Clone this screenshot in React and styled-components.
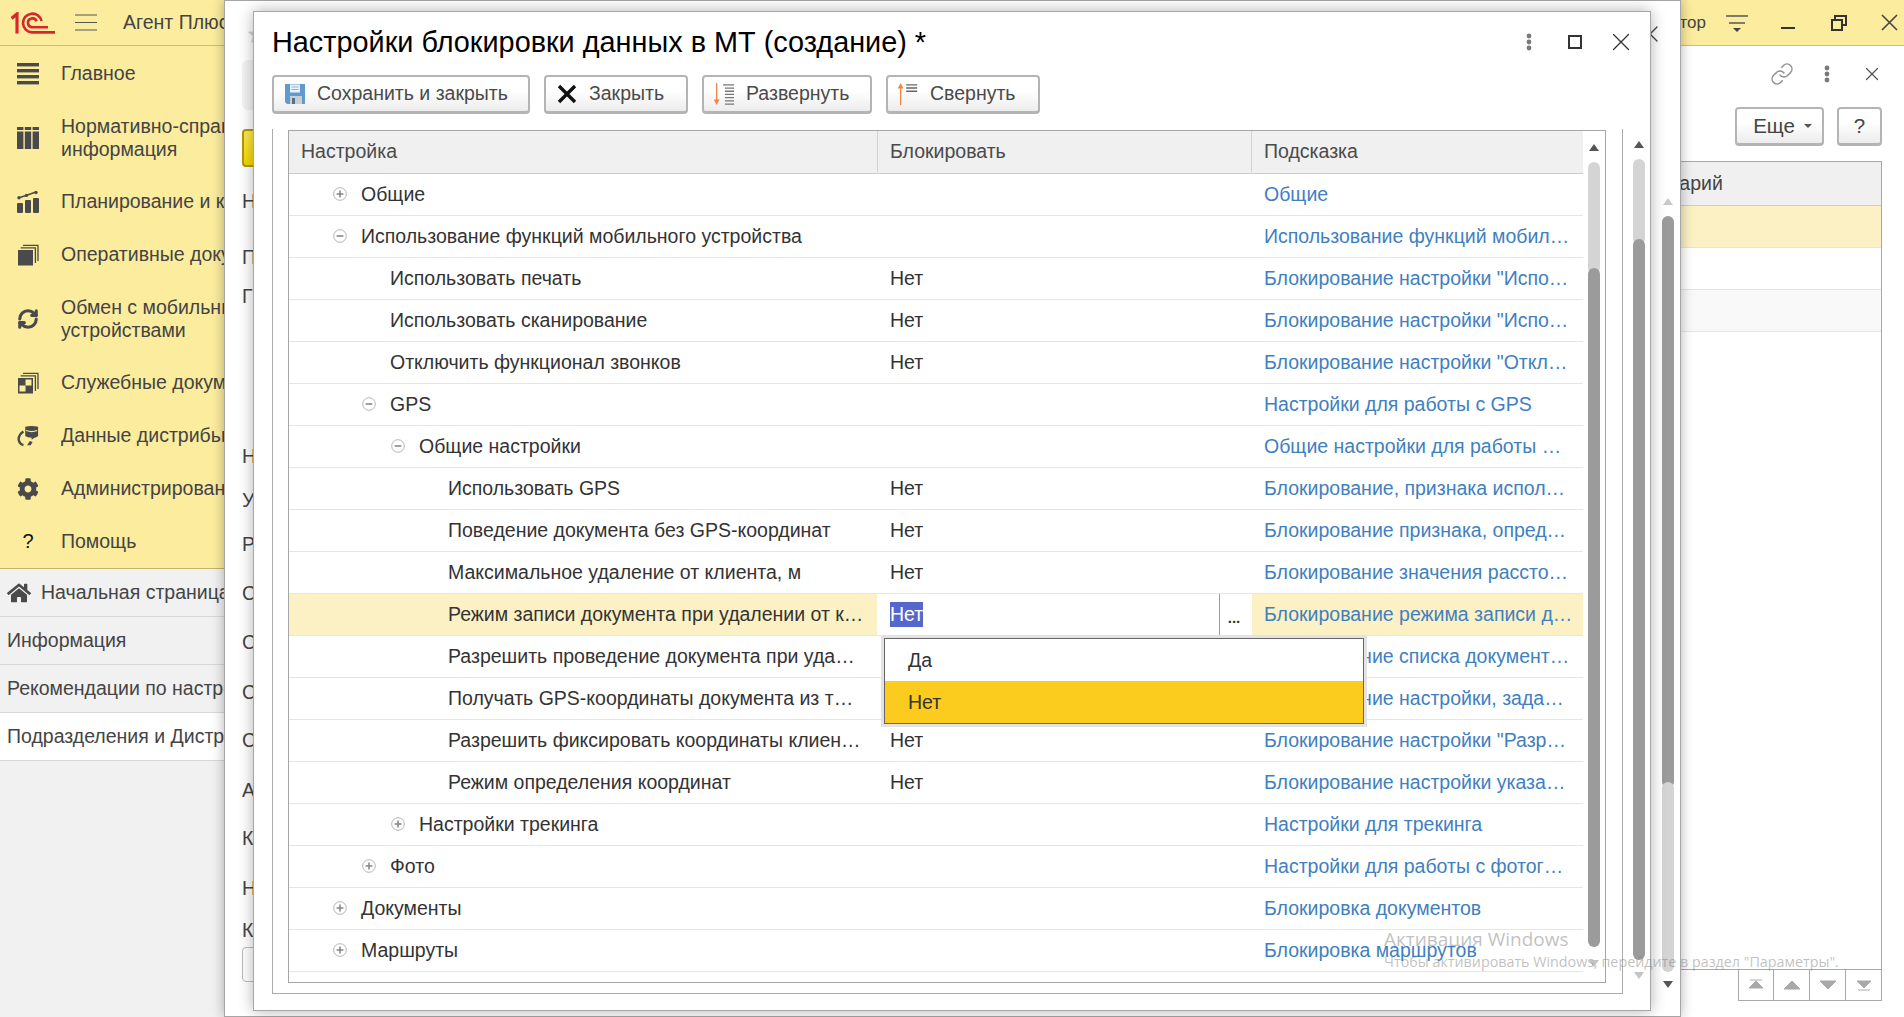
import React from 'react';
import styled, { createGlobalStyle } from 'styled-components';
import { Link as LinkIcon, RefreshCw, X } from 'lucide-react';
import { FaCog, FaHome } from 'react-icons/fa';

const FONT = '"Liberation Sans", Arial, sans-serif';

const GlobalStyle = createGlobalStyle`
  html, body { margin: 0; padding: 0; background: #fff; }
  body { font-family: ${FONT}; font-size: 19.5px; color: #333; }
  * { box-sizing: border-box; }
`;

const Screen = styled.div`
  position: relative;
  width: 1904px;
  height: 1017px;
  overflow: hidden;
  display: flex;
  flex-direction: column;
`;

const TopBar = styled.header`
  height: 46px;
  flex: none;
  display: flex;
  align-items: center;
  padding-right: 3px;
  background: #fbec9e;
  border-bottom: 1px solid #cdbd7c;
  white-space: nowrap;
`;
const Logo = styled.svg`
  width: 44px;
  height: 22px;
  margin-left: 11px;
  flex: none;
`;
const Burger = styled.svg`
  width: 22px;
  height: 17px;
  margin-left: 20px;
  flex: none;
`;
const AppName = styled.span`
  margin-left: 26px;
  color: #444;
`;
const UserName = styled.span`
  margin-left: auto;
  color: #444;
  font-size: 17px;
`;
const BarIcon = styled.svg`
  width: ${p => p.$w || 24}px;
  height: 24px;
  flex: none;
  margin-left: ${p => p.$left || 0}px;
`;

const Body = styled.div`
  flex: 1;
  display: flex;
  min-height: 0;
`;

const Sidebar = styled.aside`
  width: 224px;
  flex: none;
  display: flex;
  flex-direction: column;
  overflow: hidden;
  background: #f1f1f1;
`;
const Nav = styled.nav`
  height: 523px;
  flex: none;
  padding-top: 1px;
  background: #fbec9e;
  border-bottom: 1px solid #c4b26a;
`;
const NavItem = styled.div`
  height: ${p => (p.$double ? 75 : 53)}px;
  display: flex;
  align-items: center;
  gap: 22px;
  padding-left: 17px;
  line-height: 23px;
  color: #444;
  white-space: nowrap;
`;
const NavGlyph = styled.span`
  width: 22px;
  height: 22px;
  flex: none;
  display: flex;
  align-items: center;
  justify-content: center;
  color: #4a4a4a;
`;
const NavText = styled.div`
  min-width: 0;
  overflow: hidden;
`;
const HelpMark = styled.span`
  color: #111;
  font-size: 20px;
`;
const TabItem = styled.div`
  height: 48px;
  display: flex;
  align-items: center;
  gap: 10px;
  padding-left: 7px;
  background: ${p => (p.$active ? '#fff' : '#f1f1f1')};
  border-bottom: 1px solid #d8d8d8;
  color: #444;
  white-space: nowrap;
`;
const HomeIcon = styled(FaHome)`
  flex: none;
  color: #4a4a4a;
`;

const Page = styled.main`
  flex: 1;
  min-width: 0;
  display: flex;
  flex-direction: column;
  padding: 0 10px 16px 0;
  background: #fff;
`;
const PageIcons = styled.div`
  height: 61px;
  flex: none;
  display: flex;
  justify-content: flex-end;
  align-items: center;
  padding-bottom: 5px;
`;
const IconSlot = styled.span`
  width: 45px;
  display: flex;
  justify-content: center;
  color: #8f8f8f;
`;
const PageButtons = styled.div`
  flex: none;
  display: flex;
  justify-content: flex-end;
  gap: 13px;
  padding-right: 12px;
  margin-bottom: 15px;
`;
const FlatButton = styled.div`
  width: ${p => p.$w}px;
  height: 39px;
  display: flex;
  align-items: center;
  justify-content: center;
  gap: 9px;
  padding-left: ${p => p.$pad || 0}px;
  border: 2px solid #b4b4b4;
  border-bottom-width: 3px;
  border-radius: 4px;
  background: linear-gradient(#fff 40%, #ececec);
  color: #444;
  font-size: 20.5px;
`;
const Caret = styled.i`
  width: 0;
  height: 0;
  border-left: 4px solid transparent;
  border-right: 4px solid transparent;
  border-top: 4px solid #555;
`;
const PageTable = styled.div`
  flex: 1;
  margin-right: 12px;
  border: 1px solid #a8a8a8;
  border-left: 0;
`;
const PageHead = styled.div`
  height: 44px;
  display: grid;
  grid-template-columns: 1fr 281px;
  align-items: center;
  background: #f0f0f0;
  border-bottom: 1px solid #ccc;
  color: #444;
`;
const PageRow = styled.div`
  height: 42px;
  background: ${p => p.$bg || '#fff'};
  border-bottom: 1px solid #e4e4e4;
`;
const Pager = styled.div`
  flex: none;
  display: flex;
  justify-content: flex-end;
  margin-right: 12px;
`;
const PagerButton = styled.div`
  width: 36px;
  height: 31px;
  display: flex;
  align-items: center;
  justify-content: center;
  border: 1px solid #a8a8a8;
  border-top: 0;
  border-left-width: ${p => (p.$first ? 1 : 0)}px;
`;

/* windows on top of the page */
const OuterWindow = styled.section`
  position: absolute;
  left: 224px;
  top: 0;
  width: 1457px;
  height: 1017px;
  display: flex;
  background: #fff;
  border: 1px solid #a6a6a6;
  box-shadow: 0 0 12px rgba(0, 0, 0, 0.3);
`;
const FormColumn = styled.div`
  flex: 1;
  min-width: 0;
  padding-left: 17px;
  color: #444;
  overflow: hidden;
`;
const FormHead = styled.div`
  height: 59px;
  display: flex;
  align-items: center;
  justify-content: space-between;
  padding: 6px 0 0 5px;
  margin-right: -2px;
`;
const GreyBlock = styled.div`
  width: 60px;
  height: 50px;
  border-radius: 6px;
  background: #f3f3f3;
  margin-bottom: 19px;
`;
const YellowButton = styled.div`
  width: 60px;
  height: 38px;
  border: 2px solid #b09a08;
  border-radius: 4px;
  background: linear-gradient(#ffe94f, #f6d800);
`;
const FormLabel = styled.div`
  height: 22px;
  line-height: 22px;
  margin-top: ${p => p.$gap}px;
  white-space: nowrap;
`;
const FormInput = styled.div`
  width: 60px;
  height: 35px;
  margin-top: 6px;
  border: 1px solid #bbb;
  border-radius: 4px;
`;

const InnerWindow = styled.section`
  position: absolute;
  left: 28px;
  top: 10px;
  width: 1398px;
  height: 1000px;
  display: flex;
  flex-direction: column;
  padding-left: 18px;
  background: #fff;
  border: 1px solid #a6a6a6;
  box-shadow: 0 0 14px rgba(0, 0, 0, 0.3);
`;
const TitleRow = styled.div`
  height: 63px;
  flex: none;
  display: flex;
  align-items: center;
  padding-bottom: 3px;
`;
const Title = styled.h1`
  margin: 0;
  flex: 1;
  font-size: 28.85px;
  font-weight: 400;
  color: #000;
  white-space: nowrap;
`;
const WindowIcons = styled.div`
  display: flex;
  align-items: center;
  margin-right: 6px;
  color: #333;
`;
const WindowSlot = styled.span`
  width: 46px;
  display: flex;
  justify-content: center;
`;
const Toolbar = styled.div`
  height: 54px;
  flex: none;
  display: flex;
  gap: 14px;
`;
const ToolButton = styled.div`
  width: ${p => p.$w}px;
  height: 39px;
  display: flex;
  align-items: center;
  gap: ${p => p.$gap || 11}px;
  padding-left: ${p => p.$pad || 11}px;
  padding-bottom: 1px;
  border: 2px solid #b4b4b4;
  border-bottom-width: 3px;
  border-radius: 4px;
  background: linear-gradient(#fff 40%, #ececec);
  color: #4a4a4a;
  white-space: nowrap;
`;
const Content = styled.div`
  flex: 1;
  min-height: 0;
  display: flex;
  gap: 10px;
`;
const Frame = styled.div`
  width: 1351px;
  height: 865px;
  padding: 1px 0 0 15px;
  border: 1px solid #ababab;
  border-top: 0;
`;
const Table = styled.div`
  width: 1318px;
  height: 853px;
  display: flex;
  background: #fff;
  border: 1px solid #a6a6a6;
`;
const Rows = styled.div`
  width: 1294px;
  flex: none;
`;
const Row = styled.div`
  display: grid;
  grid-template-columns: 588px 375px 331px;
  height: 42px;
  align-items: stretch;
  border-bottom: 1px solid #e6e6e6;
`;
const HeadRow = styled(Row)`
  grid-template-columns: 589px 374px 331px;
  height: 43px;
  padding-bottom: 1px;
  background: #f0f0f0;
  border-bottom: 1px solid #ccc;
  color: #4a4a4a;
`;
const HeadCell = styled.div`
  display: flex;
  align-items: center;
  padding-left: 12px;
  border-right: ${p => (p.$last ? 0 : '1px solid #d2d2d2')};
`;
const NameCell = styled.div`
  display: flex;
  align-items: center;
  padding-left: ${p => 72 + p.$level * 29 - (p.$tree ? 28 : 0)}px;
  background: ${p => (p.$current ? '#fcf1c4' : 'transparent')};
  white-space: nowrap;
  color: #333;
`;
const Expander = styled.svg`
  width: 14px;
  height: 14px;
  flex: none;
  margin-right: 14px;
  margin-top: -2px;
`;
const ValueCell = styled.div`
  position: relative;
  display: flex;
  align-items: center;
  padding-left: 13px;
  color: #333;
`;
const SelectedText = styled.span`
  background: #5566cc;
  color: #fff;
  line-height: 25px;
`;
const PickButton = styled.span`
  position: absolute;
  right: 0;
  top: 0;
  bottom: 0;
  width: 33px;
  display: flex;
  align-items: center;
  justify-content: center;
  border-left: 1px solid #9a9a9a;
  color: #333;
  font-weight: 700;
  font-size: 15px;
  padding: 5px 4px 0 0;
`;
const Popup = styled.div`
  position: absolute;
  z-index: 5;
  left: 7px;
  top: 44px;
  width: 480px;
  height: 86px;
  background: #fff;
  border: 1px solid #666;
  box-shadow: 0 0 0 3px #e3e3e3;
`;
const PopupItem = styled.div`
  height: 42px;
  display: flex;
  align-items: center;
  padding-left: 23px;
  background: ${p => (p.$active ? '#fbcc1e' : '#fff')};
  color: #333;
`;
const HintCell = styled.div`
  display: flex;
  align-items: center;
  padding-left: 12px;
  background: ${p => (p.$current ? '#fcf1c4' : 'transparent')};
  color: #3f80c0;
  white-space: nowrap;
`;

const ScrollBar = styled.div`
  width: ${p => p.$slot || 12}px;
  flex: none;
  display: flex;
  flex-direction: column;
  align-items: center;
  padding-top: ${p => p.$top}px;
  margin-right: ${p => p.$right || 0}px;
`;
const Arrow = styled.i`
  width: 0;
  height: 0;
  flex: none;
  border-left: 5px solid transparent;
  border-right: 5px solid transparent;
  border-${p => (p.$down ? 'top' : 'bottom')}: 7px solid ${p => p.$color};
`;
const Track = styled.div`
  width: 12px;
  flex: none;
  margin: ${p => p.$before}px 0 ${p => p.$after}px;
`;
const Thumb = styled.div`
  height: ${p => p.$h}px;
  margin-top: ${p => (p.$overlap ? -6 : 0)}px;
  position: relative;
  border-radius: 6px;
  background: ${p => p.$bg};
`;

const Watermark = styled.div`
  position: absolute;
  left: 1384px;
  top: 927px;
  z-index: 10;
  font-family: "Open Sans", sans-serif;
  color: rgba(130, 130, 130, 0.5);
  pointer-events: none;
  white-space: nowrap;
`;
const WatermarkTitle = styled.div`
  font-size: 19px;
  line-height: 24px;
`;
const WatermarkText = styled.div`
  font-size: 14.3px;
  line-height: 22px;
`;

const DARK = '#9b9b9b';
const LIGHT = '#d4d4d4';

const Dots = ({ color = '#7a7a7a' }) => (
  <svg width="6" height="18" viewBox="0 0 6 18"><circle cx="3" cy="3" r="2.4" fill={color} /><circle cx="3" cy="9" r="2.4" fill={color} /><circle cx="3" cy="15" r="2.4" fill={color} /></svg>
);

const LogoMark = () => (
  <Logo viewBox="0 0 44 22" fill="none" stroke="#d9262c" strokeWidth="2.6">
    <path d="M0.6 6.4 L6 2 V21.6" strokeWidth="3.2" />
    <path d="M44 20.4 H21 A9.4 9.4 0 1 1 30.6 9" />
    <path d="M37 15.2 H21.4 A4.4 4.4 0 1 1 25.6 9.4" />
  </Logo>
);

const ICON = '#4a4a4a';
const MainIcon = () => (
  <svg width="22" height="22" viewBox="0 0 22 22" fill={ICON}><rect y="0" width="22" height="3.4" /><rect y="6" width="22" height="3.4" /><rect y="12" width="22" height="3.4" /><rect y="18" width="22" height="3.4" /></svg>
);
const CatalogIcon = () => (
  <svg width="22" height="22" viewBox="0 0 22 22" fill={ICON}><rect x="0" y="0" width="6.4" height="3" /><rect x="7.8" y="0" width="6.4" height="3" /><rect x="15.6" y="0" width="6.4" height="3" /><rect x="0" y="4.5" width="6.4" height="17.5" /><rect x="7.8" y="4.5" width="6.4" height="17.5" /><rect x="15.6" y="4.5" width="6.4" height="17.5" /></svg>
);
const PlanIcon = () => (
  <svg width="22" height="22" viewBox="0 0 22 22" fill={ICON}><rect x="0" y="12" width="6" height="10" rx="1" /><rect x="8" y="9" width="6" height="13" rx="1" /><rect x="16" y="7" width="6" height="15" rx="1" /><path d="M1 7 L9 4.5 L19 1" fill="none" stroke={ICON} strokeWidth="1.6" /><circle cx="2" cy="6.8" r="1.7" /><circle cx="9.5" cy="4.4" r="1.7" /><circle cx="19" cy="1.6" r="1.7" /></svg>
);
const DocsIcon = ({ checker }) => (
  <svg width="22" height="22" viewBox="0 0 22 22" fill={ICON}>
    <path d="M6 1.4 H21 V17 M3.6 3.8 H18.4 V19" fill="none" stroke={ICON} strokeWidth="1.3" />
    <rect x="1" y="6" width="15" height="15.5" />
    {checker && <><rect x="8.5" y="7.5" width="6" height="6" fill="#fbec9e" /><rect x="2.5" y="13.5" width="6" height="6" fill="#fbec9e" /></>}
  </svg>
);
const DataIcon = () => (
  <svg width="24" height="22" viewBox="0 0 24 22" fill={ICON}>
    <path d="M9 1 Q16 -1 23 1 V11 Q21 13 19 13 L16 15 V13 Q11 13 9 11 Z" />
    <path d="M10 5 Q16 7.4 22 5" fill="none" stroke="#fbec9e" strokeWidth="1.2" />
    <path d="M7 6 Q1 10 2 16 Q3 20 7 21" fill="none" stroke={ICON} strokeWidth="2.6" />
    <path d="M11 21 L14 16.5 L17 17.5 L15 21 Z" />
  </svg>
);

const navItems = [
  { text: 'Главное', icon: <MainIcon /> },
  { text: ['Нормативно-справочная', 'информация'], icon: <CatalogIcon /> },
  { text: 'Планирование и контроль', icon: <PlanIcon /> },
  { text: 'Оперативные документы', icon: <DocsIcon /> },
  { text: ['Обмен с мобильными', 'устройствами'], icon: <RefreshCw size={22} strokeWidth={3.4} /> },
  { text: 'Служебные документы', icon: <DocsIcon checker /> },
  { text: 'Данные дистрибьюторов', icon: <DataIcon /> },
  { text: 'Администрирование', icon: <FaCog size={22} /> },
  { text: 'Помощь', icon: <HelpMark>?</HelpMark> },
];

const tree = [
  { name: 'Общие', level: 0, tree: '+', hint: 'Общие' },
  { name: 'Использование функций мобильного устройства', level: 0, tree: '-', hint: 'Использование функций мобил…' },
  { name: 'Использовать печать', level: 1, value: 'Нет', hint: 'Блокирование настройки "Испо…' },
  { name: 'Использовать сканирование', level: 1, value: 'Нет', hint: 'Блокирование настройки "Испо…' },
  { name: 'Отключить функционал звонков', level: 1, value: 'Нет', hint: 'Блокирование настройки "Откл…' },
  { name: 'GPS', level: 1, tree: '-', hint: 'Настройки для работы с GPS' },
  { name: 'Общие настройки', level: 2, tree: '-', hint: 'Общие настройки для работы …' },
  { name: 'Использовать GPS', level: 3, value: 'Нет', hint: 'Блокирование, признака испол…' },
  { name: 'Поведение документа без GPS-координат', level: 3, value: 'Нет', hint: 'Блокирование признака, опред…' },
  { name: 'Максимальное удаление от клиента, м', level: 3, value: 'Нет', hint: 'Блокирование значения рассто…' },
  { name: 'Режим записи документа при удалении от к…', level: 3, value: 'Нет', hint: 'Блокирование режима записи д…', current: true },
  { name: 'Разрешить проведение документа при уда…', level: 3, value: 'Нет', hint: 'Блокирование списка документ…' },
  { name: 'Получать GPS-координаты документа из т…', level: 3, value: 'Нет', hint: 'Блокирование настройки, зада…' },
  { name: 'Разрешить фиксировать координаты клиен…', level: 3, value: 'Нет', hint: 'Блокирование настройки "Разр…' },
  { name: 'Режим определения координат', level: 3, value: 'Нет', hint: 'Блокирование настройки указа…' },
  { name: 'Настройки трекинга', level: 2, tree: '+', hint: 'Настройки для трекинга' },
  { name: 'Фото', level: 1, tree: '+', hint: 'Настройки для работы с фотог…' },
  { name: 'Документы', level: 0, tree: '+', hint: 'Блокировка документов' },
  { name: 'Маршруты', level: 0, tree: '+', hint: 'Блокировка маршрутов' },
];

const formLabels = [
  ['Н', 23], ['П', 34], ['Г', 17], ['Н', 138], ['У', 22], ['Р', 22],
  ['С', 27], ['С', 27], ['С', 28], ['С', 26], ['А', 28], ['К', 26], ['Н', 28], ['К', 20],
];

function TreeMark({ type }) {
  return (
    <Expander viewBox="0 0 14 14" fill="none" stroke="#8a8a8a">
      <circle cx="7" cy="7" r="6.3" stroke="#b5b5b5" />
      <path d="M3.6 7 H10.4" strokeWidth="1.6" />
      {type === '+' && <path d="M7 3.6 V10.4" strokeWidth="1.6" />}
    </Expander>
  );
}

function TreeRow({ item }) {
  return (
    <Row>
      <NameCell $level={item.level} $tree={!!item.tree} $current={item.current}>
        {item.tree && <TreeMark type={item.tree} />}
        {item.name}
      </NameCell>
      <ValueCell>
        {item.current ? (
          <>
            <SelectedText>{item.value}</SelectedText>
            <PickButton>...</PickButton>
            <Popup>
              <PopupItem>Да</PopupItem>
              <PopupItem $active>Нет</PopupItem>
            </Popup>
          </>
        ) : item.value}
      </ValueCell>
      <HintCell $current={item.current}>{item.hint}</HintCell>
    </Row>
  );
}

function Scroll({ slot, top, right, before, after, upColor, downColor, first, second }) {
  return (
    <ScrollBar $slot={slot} $top={top} $right={right}>
      <Arrow $color={upColor} />
      <Track $before={before} $after={after}>
        <Thumb $h={first.h} $bg={first.bg} />
        <Thumb $h={second.h} $bg={second.bg} $overlap />
      </Track>
      <Arrow $down $color={downColor} />
    </ScrollBar>
  );
}

function App() {
  return (
    <Screen>
      <GlobalStyle />
      <TopBar>
        <LogoMark />
        <Burger viewBox="0 0 22 17" stroke="#555" strokeWidth="1.2"><path d="M0 1 H22 M0 8.5 H22 M0 16 H22" /></Burger>
        <AppName>Агент Плюс</AppName>
        <UserName>Администратор</UserName>
        <BarIcon $left={19} viewBox="0 0 24 24" fill="none" stroke="#555" strokeWidth="1.3">
          <path d="M1 5 H23 M4 12 H20" />
          <path d="M8 17 H16 L12 21 Z" fill="#444" stroke="none" />
        </BarIcon>
        <BarIcon $left={27} viewBox="0 0 24 24" fill="none" stroke="#333" strokeWidth="2"><path d="M5 17 H19" /></BarIcon>
        <BarIcon $left={27} viewBox="0 0 24 24" fill="none" stroke="#333" strokeWidth="2">
          <path d="M8 9 V5 H19 V14 H15 M5 9 H15 V19 H5 Z" />
        </BarIcon>
        <BarIcon $left={26} viewBox="0 0 24 24" fill="none" stroke="#444" strokeWidth="1.6"><path d="M5 4 L20 19 M20 4 L5 19" /></BarIcon>
      </TopBar>
      <Body>
        <Sidebar>
          <Nav>
            {navItems.map((item, i) => (
              <NavItem key={i} $double={Array.isArray(item.text)}>
                <NavGlyph>{item.icon}</NavGlyph>
                <NavText>{Array.isArray(item.text) ? item.text.map(t => <div key={t}>{t}</div>) : item.text}</NavText>
              </NavItem>
            ))}
          </Nav>
          <TabItem><HomeIcon size={24} />Начальная страница</TabItem>
          <TabItem>Информация</TabItem>
          <TabItem>Рекомендации по настройке</TabItem>
          <TabItem $active>Подразделения и Дистрибьюторы</TabItem>
        </Sidebar>
        <Page>
          <PageIcons>
            <IconSlot><LinkIcon size={24} strokeWidth={1.5} /></IconSlot>
            <IconSlot><Dots /></IconSlot>
            <IconSlot><X size={22} strokeWidth={1.3} color="#555" /></IconSlot>
          </PageIcons>
          <PageButtons>
            <FlatButton $w={89} $pad={6}>Еще<Caret /></FlatButton>
            <FlatButton $w={45}>?</FlatButton>
          </PageButtons>
          <PageTable>
            <PageHead><span /><span>Комментарий</span></PageHead>
            <PageRow $bg="#fcf1c4" />
            <PageRow />
            <PageRow $bg="#f9f9f9" />
          </PageTable>
          <Pager>
            {['M3 2 H15 M9 3 L16 10 H2 Z', 'M9 3 L17 11 H1 Z', 'M1 3 H17 L9 11 Z', 'M2 3 H16 L9 10 Z M3 12 H15'].map((d, i) => (
              <PagerButton key={i} $first={i === 0}>
                <svg width="18" height="14" viewBox="0 0 18 14" fill="#a9a9a9" stroke="#a9a9a9" strokeWidth="1"><path d={d} /></svg>
              </PagerButton>
            ))}
          </Pager>
        </Page>
      </Body>

      <OuterWindow>
        <FormColumn>
          <FormHead>
            <svg width="20" height="20" viewBox="0 0 20 20" fill="#ccd3d8"><path d="M10 1 L12.6 7.4 L19.4 7.8 L14.2 12.2 L15.9 19 L10 15.3 L4.1 19 L5.8 12.2 L0.6 7.8 L7.4 7.4 Z" /></svg>
            <X size={28} strokeWidth={1.2} color="#444" />
          </FormHead>
          <GreyBlock />
          <YellowButton />
          {formLabels.map(([text, gap], i) => <FormLabel key={i} $gap={gap}>{text}</FormLabel>)}
          <FormInput />
        </FormColumn>
        <Scroll
          top={197} right={6} before={11} after={9}
          upColor="#c9c9c9" downColor="#555"
          first={{ h: 572, bg: DARK }} second={{ h: 190, bg: LIGHT }}
        />

        <InnerWindow>
          <TitleRow>
            <Title>Настройки блокировки данных в МТ (создание) *</Title>
            <WindowIcons>
              <WindowSlot><Dots /></WindowSlot>
              <WindowSlot>
                <svg width="14" height="14" viewBox="0 0 14 14" fill="none" stroke="#333" strokeWidth="2"><rect x="1" y="1" width="12" height="12" /></svg>
              </WindowSlot>
              <WindowSlot><X size={30} strokeWidth={1} /></WindowSlot>
            </WindowIcons>
          </TitleRow>
          <Toolbar>
            <ToolButton $w={258} $gap={12}>
              <svg width="20" height="20" viewBox="0 0 20 20">
                <path d="M0 0 H20 V20 H2 L0 18 Z" fill="#5f9bd1" />
                <rect x="5" y="0.5" width="10" height="8" fill="#e9f1f8" />
                <path d="M6.5 3 H13.5 M6.5 5.5 H13.5" stroke="#8fb3d3" strokeWidth="1" />
                <rect x="5" y="12" width="12" height="8" fill="#c9ced2" />
                <rect x="7" y="14" width="3" height="6" fill="#54718a" />
              </svg>
              Сохранить и закрыть
            </ToolButton>
            <ToolButton $w={144} $gap={12}>
              <svg width="20" height="20" viewBox="0 0 20 20" fill="none" stroke="#111" strokeWidth="3.4"><path d="M2 2 L18 18 M18 2 L2 18" /></svg>
              Закрыть
            </ToolButton>
            <ToolButton $w={170} $pad={9}>
              <svg width="22" height="26" viewBox="0 0 24 26" fill="none">
                <path d="M4 1 V22" stroke="#f0844a" strokeWidth="1.4" />
                <path d="M0.8 19 H7.2 L4 25 Z" fill="#f0844a" />
                <path d="M11 3 H23 M13 6.5 H23 M13 10 H23 M13 13.5 H23 M13 17 H23 M13 20.5 H23 M13 24 H23" stroke="#777" strokeWidth="1.4" />
              </svg>
              Развернуть
            </ToolButton>
            <ToolButton $w={154} $pad={9}>
              <svg width="22" height="26" viewBox="0 0 24 26" fill="none">
                <path d="M4 4 V25" stroke="#f0844a" strokeWidth="1.4" />
                <path d="M0.8 7 H7.2 L4 1 Z" fill="#f0844a" />
                <path d="M10 3 H22 M10 6.5 H22 M10 10 H22" stroke="#666" strokeWidth="1.5" />
              </svg>
              Свернуть
            </ToolButton>
          </Toolbar>
          <Content>
            <Frame>
              <Table>
                <Rows>
                  <HeadRow>
                    <HeadCell>Настройка</HeadCell>
                    <HeadCell>Блокировать</HeadCell>
                    <HeadCell $last>Подсказка</HeadCell>
                  </HeadRow>
                  {tree.map(item => <TreeRow key={item.name} item={item} />)}
                </Rows>
                <Scroll
                  slot={22} top={13} before={11} after={13}
                  upColor="#555" downColor="#c4c4c4"
                  first={{ h: 112, bg: LIGHT }} second={{ h: 679, bg: DARK }}
                />
              </Table>
            </Frame>
            <Scroll
              top={12} before={11} after={12}
              upColor="#555" downColor="#c4c4c4"
              first={{ h: 86, bg: LIGHT }} second={{ h: 721, bg: DARK }}
            />
          </Content>
        </InnerWindow>
      </OuterWindow>

      <Watermark>
        <WatermarkTitle>Активация Windows</WatermarkTitle>
        <WatermarkText>Чтобы активировать Windows, перейдите в раздел "Параметры".</WatermarkText>
      </Watermark>
    </Screen>
  );
}

export default App;
